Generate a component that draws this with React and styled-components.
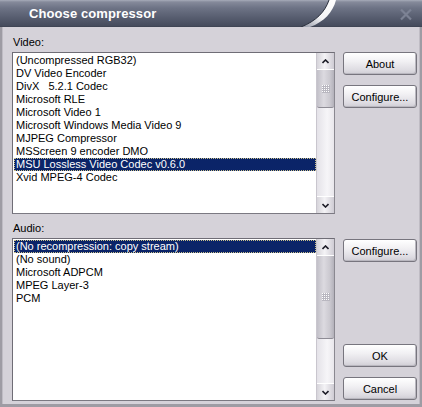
import styled, { createGlobalStyle } from "styled-components";

const GlobalStyle = createGlobalStyle`
  html, body {
    margin: 0;
    padding: 0;
    background: #d5d2d9;
  }
  body {
    font-family: "Liberation Sans", Arial, sans-serif;
  }
`;

const videoCodecs = [
  "(Uncompressed RGB32)",
  "DV Video Encoder",
  "DivX   5.2.1 Codec",
  "Microsoft RLE",
  "Microsoft Video 1",
  "Microsoft Windows Media Video 9",
  "MJPEG Compressor",
  "MSScreen 9 encoder DMO",
  "MSU Lossless Video Codec v0.6.0",
  "Xvid MPEG-4 Codec",
];

const audioCodecs = [
  "(No recompression: copy stream)",
  "(No sound)",
  "Microsoft ADPCM",
  "MPEG Layer-3",
  "PCM",
];

function Chevron({ up }) {
  return (
    <svg width="7" height="5" viewBox="0 0 7 5">
      <path
        d={up ? "M0.5 4 L3.5 1 L6.5 4" : "M0.5 1 L3.5 4 L6.5 1"}
        fill="none"
        stroke="#1e1e28"
        strokeWidth="1.6"
      />
    </svg>
  );
}

function Gripper() {
  const dots = [];
  for (let r = 0; r < 4; r++)
    for (let c = 0; c < 4; c++)
      dots.push(<rect key={r + "-" + c} x={c * 2} y={r * 2} width="1" height="1" fill="#ffffff" />);
  return (
    <svg width="8" height="8" viewBox="0 0 8 8">
      <rect x="0" y="0" width="8" height="8" fill="#b9b7c0" />
      {dots}
    </svg>
  );
}

function ScrollBar({ thumbTop, thumbHeight }) {
  return (
    <Scroll>
      <ArrowBtn>
        <Chevron up />
      </ArrowBtn>
      <Track>
        <Thumb style={{ top: thumbTop, height: thumbHeight }}>
          <Gripper />
        </Thumb>
      </Track>
      <ArrowBtn>
        <Chevron />
      </ArrowBtn>
    </Scroll>
  );
}

function CodecList({ items, selected, height, thumbTop, thumbHeight }) {
  return (
    <ListBox $h={height}>
      <Items>
        {items.map((item, i) => (
          <Item key={i} $selected={i === selected}>
            {item}
          </Item>
        ))}
      </Items>
      <ScrollBar thumbTop={thumbTop} thumbHeight={thumbHeight} />
    </ListBox>
  );
}

export default function App() {
  return (
    <Window>
      <GlobalStyle />
      <TitleBar>
        <Title>Choose compressor</Title>
        <Swoosh width="40" height="27" viewBox="0 0 40 27">
          <defs>
            <linearGradient id="sw" x1="0" y1="1" x2="1" y2="0">
              <stop offset="0" stopColor="#8e93a2" />
              <stop offset="0.45" stopColor="#f4f4f6" />
              <stop offset="1" stopColor="#ffffff" />
            </linearGradient>
          </defs>
          <path
            d="M33 0 L40 0 C37 12 28 22 14 27 L5 27 C20 21 29 12 33 0 Z"
            fill="url(#sw)"
          />
          <path d="M5 27 C20 21 29 12 33 0" fill="none" stroke="#2a2f3c" strokeWidth="1" />
        </Swoosh>
        <Close width="14" height="13" viewBox="0 0 14 13">
          <path d="M2 1.5 L12 11.5 M12 1.5 L2 11.5" stroke="#7c8294" strokeWidth="2.2" />
        </Close>
      </TitleBar>
      <Frame>
        <Section>
          <Column>
            <Label>Video:</Label>
            <CodecList items={videoCodecs} selected={8} height={162} thumbTop={0} thumbHeight={38} />
          </Column>
          <Buttons $top={16}>
            <Button>About</Button>
            <Button>Configure...</Button>
          </Buttons>
        </Section>
        <Section>
          <Column>
            <Label>Audio:</Label>
            <CodecList items={audioCodecs} selected={0} height={163} thumbTop={0} thumbHeight={83} />
          </Column>
          <Buttons $top={17}>
            <Button>Configure...</Button>
            <Spacer />
            <Button>OK</Button>
            <Button>Cancel</Button>
          </Buttons>
        </Section>
      </Frame>
    </Window>
  );
}

const Window = styled.div`
  width: 422px;
  height: 407px;
  display: flex;
  flex-direction: column;
  background: #d5d2d9;
  overflow: hidden;
`;

const TitleBar = styled.div`
  height: 27px;
  flex: none;
  display: flex;
  align-items: center;
  background: linear-gradient(
    to bottom,
    #a7acb9 0px,
    #858a9a 2px,
    #6d7385 8px,
    #565c6e 18px,
    #454b5c 26px,
    #3a3f4d 27px
  );
  position: relative;
`;

const Title = styled.div`
  margin-left: 29px;
  color: #ffffff;
  font-family: "Liberation Sans", Arial, sans-serif;
  font-weight: bold;
  font-size: 13px;
  letter-spacing: 0.1px;
  padding-bottom: 1px;
`;

const Swoosh = styled.svg`
  position: absolute;
  left: 296px;
  top: 0;
`;

const Close = styled.svg`
  position: absolute;
  left: 399px;
  top: 8px;
`;

const Frame = styled.div`
  flex: 1;
  display: flex;
  flex-direction: column;
  gap: 8px;
  padding: 9px 3px 3px 10px;
  border-left: 2px solid #9e9ca4;
  border-right: 2px solid #9e9ca4;
  border-bottom: 3px solid #9e9ca4;
  box-shadow: inset 1px 0 0 #bfbcc4, inset -1px 0 0 #bfbcc4;
`;

const Section = styled.div`
  display: flex;
  gap: 8px;
`;

const Column = styled.div`
  width: 323px;
  display: flex;
  flex-direction: column;
`;

const Label = styled.div`
  height: 13px;
  line-height: 13px;
  font-size: 11px;
  color: #000;
  margin-bottom: 3px;
  padding-left: 1px;
`;

const ListBox = styled.div`
  box-sizing: border-box;
  height: ${(p) => p.$h}px;
  display: flex;
  background: #ffffff;
  border: 1px solid #6f6d76;
  border-right-color: #8a8890;
  border-bottom-color: #7b7982;
`;

const Items = styled.div`
  flex: 1;
  padding: 1px 0 0 1px;
`;

const Item = styled.div`
  height: 13px;
  line-height: 13px;
  font-size: 11px;
  padding-left: 2px;
  white-space: pre;
  color: ${(p) => (p.$selected ? "#ffffff" : "#000000")};
  background: ${(p) => (p.$selected ? "#0b2468" : "transparent")};
  outline: ${(p) => (p.$selected ? "1px dotted #c9c08a" : "none")};
  outline-offset: -1px;
`;

const Scroll = styled.div`
  width: 17px;
  display: flex;
  flex-direction: column;
  background: linear-gradient(to right, #e4e2e8, #f6f5f8 60%, #e9e7ec);
  border-left: 1px solid #c9c6ce;
`;

const ArrowBtn = styled.div`
  height: 16px;
  flex: none;
  display: flex;
  align-items: center;
  justify-content: center;
  background: linear-gradient(to right, #d6d4da, #f4f3f6 45%, #cfccd4);
  border-bottom: 1px solid #ffffff;
  &:last-child {
    border-bottom: none;
    border-top: 1px solid #ffffff;
  }
`;

const Track = styled.div`
  flex: 1;
  position: relative;
`;

const Thumb = styled.div`
  position: absolute;
  left: 0;
  right: 0;
  box-sizing: border-box;
  display: flex;
  align-items: center;
  justify-content: center;
  background: linear-gradient(to right, #c2c0c8, #dcdae0 40%, #cbc9d0 75%, #b3b1ba);
  border-bottom: 1px solid #8e8c95;
  border-radius: 0 0 2px 2px;
`;

const Buttons = styled.div`
  width: 74px;
  display: flex;
  flex-direction: column;
  gap: 10px;
  padding-top: ${(p) => p.$top}px;
  padding-bottom: 1px;
`;

const Spacer = styled.div`
  flex: 1;
  margin-top: -10px;
`;

const Button = styled.button`
  box-sizing: border-box;
  width: 74px;
  height: 23px;
  padding: 0;
  font-family: "Liberation Sans", Arial, sans-serif;
  font-size: 11px;
  color: #000;
  border: 1px solid #77757e;
  border-radius: 3px;
  background: linear-gradient(to bottom, #ffffff 0%, #f1f0f3 40%, #dedce2 80%, #cfcdd4 100%);
  box-shadow: inset -1px -1px 0 #b9b7bf;
`;
